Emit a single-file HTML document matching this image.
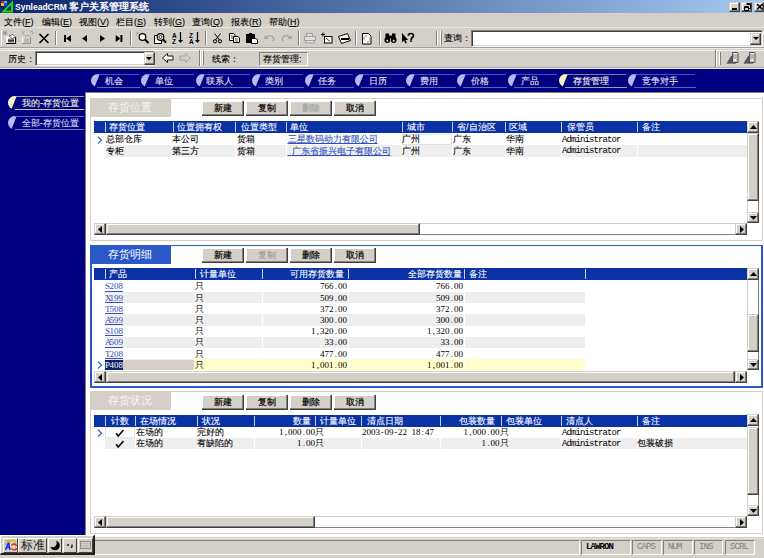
<!DOCTYPE html><html><head><meta charset="utf-8"><style>
*{margin:0;padding:0;box-sizing:border-box}
html,body{width:764px;height:558px;overflow:hidden;background:#d4d0c8;font-family:"Liberation Sans",sans-serif}
div{position:absolute}
svg{position:absolute;overflow:visible}
.t{font-size:9px;line-height:11px;white-space:nowrap;color:#000;-webkit-text-stroke:0.1px currentColor}
.m{font-family:"Liberation Mono",monospace;font-size:9px;line-height:11px;white-space:nowrap;letter-spacing:-0.9px;color:#000}
.n{font-family:"Liberation Serif",serif;font-size:9px;line-height:11px;white-space:nowrap;letter-spacing:0;color:#000}
.lk{color:#3050c0;text-decoration:underline}
.btn{background:#d4d0c8;border-right:1px solid #404040;border-bottom:1px solid #404040;box-shadow:inset -1px -1px 0 #808080, inset 1px 1px 0 #fff;font-size:9px;line-height:14px;text-align:center;white-space:nowrap;-webkit-text-stroke:0.2px currentColor}
.sunk{border-top:1px solid #808080;border-left:1px solid #808080;border-bottom:1px solid #fff;border-right:1px solid #fff;box-shadow:inset 1px 1px 0 #404040, inset -1px -1px 0 #d4d0c8}
.raise{background:#d4d0c8;border-top:1px solid #d4d0c8;border-left:1px solid #d4d0c8;border-right:1px solid #404040;border-bottom:1px solid #404040;box-shadow:inset -1px -1px 0 #808080, inset 1px 1px 0 #fff}
</style></head><body>
<div style="left:0;top:0;width:764px;height:13px;background:linear-gradient(to right,#0a246a 0%,#a6caf0 100%)"></div>
<svg style="left:0;top:0" width="14" height="13" viewBox="0 0 14 13"><rect x="1" y="1" width="3" height="2" fill="#e02020"/><rect x="4" y="1" width="3" height="2" fill="#20d0f0"/><rect x="1" y="3" width="3" height="3" fill="#e0c020"/><rect x="4" y="3" width="3" height="3" fill="#2040f0"/><path d="M1 12.5 L13 0.5 L13 12.5 Z M5.5 10.5 L11 10.5 L11 5 Z" fill="#10e010" fill-rule="evenodd"/></svg>
<div class="t" style="left:15px;top:1px;color:#fff;font-weight:bold;line-height:12px;-webkit-text-stroke:0"><span style="font-size:8.5px">SynleadCRM</span> <span style="font-size:9.6px">客户关系管理系统</span></div>
<div class="raise" style="left:729px;top:2px;width:11px;height:10px"></div>
<div class="raise" style="left:741px;top:2px;width:11px;height:10px"></div>
<div class="raise" style="left:754px;top:2px;width:10px;height:10px"></div>
<div style="left:732px;top:8px;width:5px;height:2px;background:#000"></div>
<svg style="left:743px;top:3px" width="9" height="8"><path d="M3.5 1.5h4v4h-1.5 M3.5 0.5h4 M1.5 3.5h4v4h-4z M1.5 4.5h4" stroke="#000" fill="none" stroke-width="1"/></svg>
<svg style="left:756px;top:3px" width="8" height="8"><path d="M1 1L6.5 6.5M6.5 1L1 6.5" stroke="#000" stroke-width="1.5"/></svg>
<div class="t" style="left:4px;top:15.7px;line-height:12px;-webkit-text-stroke:0.1px #000">文件(<u>F</u>)</div>
<div class="t" style="left:42px;top:15.7px;line-height:12px;-webkit-text-stroke:0.1px #000">编辑(<u>E</u>)</div>
<div class="t" style="left:79px;top:15.7px;line-height:12px;-webkit-text-stroke:0.1px #000">视图(<u>V</u>)</div>
<div class="t" style="left:116px;top:15.7px;line-height:12px;-webkit-text-stroke:0.1px #000">栏目(<u>S</u>)</div>
<div class="t" style="left:154px;top:15.7px;line-height:12px;-webkit-text-stroke:0.1px #000">转到(<u>G</u>)</div>
<div class="t" style="left:192px;top:15.7px;line-height:12px;-webkit-text-stroke:0.1px #000">查询(<u>Q</u>)</div>
<div class="t" style="left:231px;top:15.7px;line-height:12px;-webkit-text-stroke:0.1px #000">报表(<u>R</u>)</div>
<div class="t" style="left:269px;top:15.7px;line-height:12px;-webkit-text-stroke:0.1px #000">帮助(<u>H</u>)</div>
<div style="left:0px;top:27px;width:764px;height:1px;background:#e8e6e0"></div>
<div style="left:0px;top:47px;width:764px;height:1px;background:#a0a0a0"></div>
<div style="left:0px;top:48px;width:764px;height:1px;background:#ececec"></div>
<div style="left:0px;top:50px;width:764px;height:1px;background:#f4f4f4"></div>
<div style="left:0px;top:67px;width:764px;height:1px;background:#a8a8a8"></div>
<div style="left:0px;top:68px;width:764px;height:1px;background:#ececec"></div>
<div style="left:1px;top:30px;width:1px;height:15px;background:#fff"></div>
<div style="left:55px;top:31px;width:1px;height:14px;background:#808080"></div>
<div style="left:56px;top:31px;width:1px;height:14px;background:#fff"></div>
<div style="left:130px;top:31px;width:1px;height:14px;background:#808080"></div>
<div style="left:131px;top:31px;width:1px;height:14px;background:#fff"></div>
<div style="left:205px;top:31px;width:1px;height:14px;background:#808080"></div>
<div style="left:206px;top:31px;width:1px;height:14px;background:#fff"></div>
<div style="left:298px;top:31px;width:1px;height:14px;background:#808080"></div>
<div style="left:299px;top:31px;width:1px;height:14px;background:#fff"></div>
<div style="left:355px;top:31px;width:1px;height:14px;background:#808080"></div>
<div style="left:356px;top:31px;width:1px;height:14px;background:#fff"></div>
<div style="left:379px;top:31px;width:1px;height:14px;background:#808080"></div>
<div style="left:380px;top:31px;width:1px;height:14px;background:#fff"></div>
<div style="left:436px;top:31px;width:1px;height:14px;background:#808080"></div>
<div style="left:437px;top:31px;width:1px;height:14px;background:#fff"></div>
<div style="left:440px;top:31px;width:1px;height:14px;background:#fff"></div>
<div style="left:441px;top:31px;width:1px;height:14px;background:#808080"></div>
<svg style="left:0;top:0" width="764" height="70"><path d="M3 31l4 4M7 31l-4 4M5 30.5v5M2.5 33h5" stroke="#909090" stroke-width="0.8"/><path d="M6.5 36.5v7h9v-7" fill="#fff" stroke="#f8f8f8"/><path d="M6 43.5h10M15.5 37v7" stroke="#000" stroke-width="1.2"/><rect x="8" y="38.5" width="6" height="4" fill="#808080"/><rect x="8" y="40" width="6" height="1.5" fill="#404040"/><path d="M9 36l3.5-1.5 3 2.5-3 1.5z" fill="#fff" stroke="#303030" stroke-width="0.7"/><path d="M21 31l4 4M25 31l-4 4M23 30.5v5" stroke="#b0b0b0" stroke-width="0.8"/><path d="M22.5 37v6.5h8v-6.5" fill="none" stroke="#fff" stroke-width="1"/><path d="M22 43.5h9M30.5 37v7" stroke="#909090" stroke-width="1"/><rect x="24" y="38.5" width="5" height="4" fill="#b8b8b8"/><path d="M25 36.5l3-1.5 2.5 2" stroke="#909090" fill="none" stroke-width="0.8"/><path d="M30.5 32.5c0-1.5 2.5-1.5 2.5 0s-1.2 1-1.2 2.2" stroke="#909090" fill="none" stroke-width="0.9"/><path d="M39.5 34L48.5 43M48.5 34L39.5 43" stroke="#000" stroke-width="1.6"/><rect x="64" y="35" width="2" height="7" fill="#000"/><path d="M71 35v7l-5-3.5z" fill="#000"/><path d="M87 35v7l-5-3.5z" fill="#000"/><path d="M100 35v7l5-3.5z" fill="#000"/><path d="M115.7 35v7l4.7-3.5z" fill="#000"/><rect x="120.4" y="35" width="2" height="7" fill="#000"/><path d="M136 32l2 2M138 32v2M136 34h2" stroke="#a0a0a0" stroke-width="0.8"/><circle cx="142.5" cy="37" r="3.3" fill="#fff" stroke="#000" stroke-width="1.2"/><path d="M145 39.5L148.5 43" stroke="#000" stroke-width="2"/><path d="M154.5 35.5h5l2 2v6h-7z" fill="#fff" stroke="#000"/><circle cx="160.5" cy="37" r="3.3" fill="#fff" stroke="#000" stroke-width="1.2"/><circle cx="160.5" cy="37" r="1.5" fill="none" stroke="#000" stroke-width="0.8"/><path d="M163 39.5L166 42.5" stroke="#000" stroke-width="2"/><text x="172" y="37.5" font-family="Liberation Sans" font-weight="bold" font-size="6.5" fill="#000">A</text><text x="172" y="43.5" font-family="Liberation Sans" font-weight="bold" font-size="6.5" fill="#000">Z</text><path d="M180.5 32v9" stroke="#000" stroke-width="1.2"/><path d="M178 40h5l-2.5 3z" fill="#000"/><text x="189" y="37.5" font-family="Liberation Sans" font-weight="bold" font-size="6.5" fill="#000">Z</text><text x="189" y="43.5" font-family="Liberation Sans" font-weight="bold" font-size="6.5" fill="#000">A</text><path d="M197.5 32v9" stroke="#000" stroke-width="1.2"/><path d="M195 40h5l-2.5 3z" fill="#000"/><path d="M214.5 33.5L219.5 40M220.5 33.5L215.5 40" stroke="#000" stroke-width="1"/><circle cx="215" cy="41.3" r="1.6" fill="none" stroke="#000" stroke-width="1"/><circle cx="220" cy="41.3" r="1.6" fill="none" stroke="#000" stroke-width="1"/><path d="M229.5 33.5h4l1.5 1.5v5.5h-5.5z" fill="#fff" stroke="#000"/><path d="M233.5 36.5h4.5l1.5 1.5v4.5h-6z" fill="#fff" stroke="#000"/><path d="M231 36h2M231 38h2M235 39h3M235 41h3" stroke="#000" stroke-width="0.7"/><rect x="246.5" y="34.5" width="8" height="8" fill="#000" stroke="#000"/><rect x="249" y="33" width="3" height="2" fill="#000"/><path d="M251.5 38.5h4.5l1.5 1.5v3.5h-6z" fill="#fff" stroke="#000"/><path d="M266 37.5c2-2.5 6-2.5 7.5 0.5c0.5 1.5 0 2.5-1 3" stroke="#a0a0a0" fill="none" stroke-width="1.2"/><path d="M264.5 35v4h4z" fill="#a0a0a0"/><path d="M290 37.5c-2-2.5-6-2.5-7.5 0.5c-0.5 1.5 0 2.5 1 3" stroke="#a0a0a0" fill="none" stroke-width="1.2"/><path d="M291.5 35v4h-4z" fill="#a0a0a0"/><path d="M306.5 33.5h6v3h-6z M304.5 36.5h11v4h-11z M305.5 40.5h9v2.5h-9z" fill="#e0e0e0" stroke="#a0a0a0"/><path d="M321 34.5h4M323 32.5v4" stroke="#000" stroke-width="1"/><rect x="324.5" y="36.5" width="7.5" height="6.5" fill="#fff" stroke="#000"/><path d="M326 38l4 3.5" stroke="#000" stroke-width="0.8"/><path d="M338.5 36.5l9-3 3 7-9 3z" fill="#fff" stroke="#000"/><rect x="341" y="38" width="8" height="2" fill="#000"/><path d="M362.5 33.5h6l2.5 2.5v8h-8.5z" fill="#fff" stroke="#000"/><path d="M365 40.5a2.5 2.5 0 0 1 2-4.5M369 37.5a2.5 2.5 0 0 1-2 4.5" stroke="#808080" fill="none" stroke-width="0.9"/><circle cx="387.3" cy="40" r="2.9" fill="#000"/><circle cx="393.7" cy="40" r="2.9" fill="#000"/><rect x="385.5" y="33.5" width="3.5" height="6" fill="#000"/><rect x="392" y="33.5" width="3.5" height="6" fill="#000"/><rect x="388" y="35.5" width="5" height="3" fill="#000"/><circle cx="387.3" cy="40.8" r="1.1" fill="#d4d0c8"/><circle cx="393.7" cy="40.8" r="1.1" fill="#d4d0c8"/><path d="M402 33v9.5l2-2 1.6 3 1.3-.7-1.5-2.8h2.8z" fill="#000"/><path d="M408.3 35.8c0-1.7 1.3-2.3 2.6-2.3s2.6 0.7 2.6 2.2c0 1.7-2.3 1.9-2.3 3.6v0.6" stroke="#000" stroke-width="1.7" fill="none"/><rect x="410.2" y="40.3" width="1.7" height="1.6" fill="#000"/><path d="M162.5 58l5-4.5v2.5h5.5v4h-5.5v2.5z" fill="#fff" stroke="#000" stroke-width="0.9"/><path d="M190.5 58l-5-4.5v2.5h-5.5v4h5.5v2.5z" fill="none" stroke="#a8a8a8" stroke-width="1"/><path d="M726.5 63.5l4.5-7.5 2 0 0 7.5z" fill="#505868"/><path d="M732.5 52.5h5l0.5 0.5v9.5h-5.5z" fill="#eeeeee" stroke="#505050"/><path d="M733 55h4.5M733 57h4.5" stroke="#606060" stroke-width="0.8"/><rect x="734" y="58.5" width="2.5" height="3" fill="#fff" stroke="#909090" stroke-width="0.6"/><path d="M727 63.5h9" stroke="#808080"/><path d="M743.5 63.5l4.5-7.5 2 0 0 7.5z" fill="#505868"/><path d="M749.5 52.5h5l0.5 0.5v9.5h-5.5z" fill="#eeeeee" stroke="#505050"/><path d="M750 55h4.5M750 57h4.5" stroke="#606060" stroke-width="0.8"/><rect x="751" y="58.5" width="2.5" height="3" fill="#fff" stroke="#909090" stroke-width="0.6"/><path d="M744 63.5h9" stroke="#808080"/></svg>
<div class="t" style="left:8px;top:54px;">历史：</div>
<div class="sunk" style="left:35px;top:51px;width:120px;height:15px;background:#fff"></div>
<div class="raise" style="left:143.5px;top:52px;width:11px;height:13px"></div>
<svg style="left:146px;top:57px" width="6" height="4"><path d="M0 0h6L3 3.2z" fill="#000"/></svg>
<div style="left:199px;top:50px;width:1px;height:16px;background:#808080"></div>
<div style="left:200px;top:50px;width:1px;height:16px;background:#fff"></div>
<div style="left:202px;top:51px;width:1px;height:14px;background:#fff"></div>
<div style="left:203px;top:51px;width:1px;height:14px;background:#808080"></div>
<div class="t" style="left:212px;top:54px;">线索：</div>
<div style="left:259px;top:52px;width:49px;height:14px;border-top:1px solid #808080;border-left:1px solid #808080;border-bottom:1px solid #fff;border-right:1px solid #fff"></div>
<div class="t" style="left:263px;top:54px;">存货管理:</div>
<div style="left:715px;top:50px;width:1px;height:17px;background:#808080"></div>
<div style="left:716px;top:50px;width:1px;height:17px;background:#fff"></div>
<div style="left:719px;top:52px;width:1px;height:13px;background:#fff"></div>
<div style="left:720px;top:52px;width:1px;height:13px;background:#808080"></div>
<div class="sunk" style="left:471px;top:30px;width:292px;height:17px;background:#fff"></div>
<div class="t" style="left:444px;top:33px;">查询：</div>
<div class="raise" style="left:750px;top:33px;width:11px;height:12px"></div>
<svg style="left:753px;top:37px" width="6" height="4"><path d="M0 0h6L3 3z" fill="#000"/></svg>
<div style="left:0px;top:69px;width:764px;height:466px;background:#000080"></div>
<svg style="left:90.8px;top:74.3px" width="8.8" height="12.6" viewBox="0 0 9 13" preserveAspectRatio="none"><path d="M8.6 0 H6.5 C2.5 0.6 0 3.5 0 6.8 C0 9.3 1.6 11.6 3.8 12.8 L8.6 1 Z" fill="#b8b8f4"/></svg>
<div style="left:97px;top:74.3px;width:42px;height:1px;background:#6c6cc8;opacity:0.7"></div>
<div style="left:96.5px;top:87.2px;width:43px;height:1px;background:#6c6cc8;opacity:0.9"></div>
<div class="t" style="left:105px;top:76.2px;color:#e0e0f8;-webkit-text-stroke:0.1px currentColor">机会</div>
<svg style="left:140.8px;top:74.3px" width="8.8" height="12.6" viewBox="0 0 9 13" preserveAspectRatio="none"><path d="M8.6 0 H6.5 C2.5 0.6 0 3.5 0 6.8 C0 9.3 1.6 11.6 3.8 12.8 L8.6 1 Z" fill="#b8b8f4"/></svg>
<div style="left:147px;top:74.3px;width:47px;height:1px;background:#6c6cc8;opacity:0.7"></div>
<div style="left:146.5px;top:87.2px;width:48px;height:1px;background:#6c6cc8;opacity:0.9"></div>
<div class="t" style="left:155px;top:76.2px;color:#e0e0f8;-webkit-text-stroke:0.1px currentColor">单位</div>
<svg style="left:195.8px;top:74.3px" width="8.8" height="12.6" viewBox="0 0 9 13" preserveAspectRatio="none"><path d="M8.6 0 H6.5 C2.5 0.6 0 3.5 0 6.8 C0 9.3 1.6 11.6 3.8 12.8 L8.6 1 Z" fill="#b8b8f4"/></svg>
<div style="left:202px;top:74.3px;width:48px;height:1px;background:#6c6cc8;opacity:0.7"></div>
<div style="left:201.5px;top:87.2px;width:49px;height:1px;background:#6c6cc8;opacity:0.9"></div>
<div class="t" style="left:206px;top:76.2px;color:#e0e0f8;-webkit-text-stroke:0.1px currentColor">联系人</div>
<svg style="left:251.8px;top:74.3px" width="8.8" height="12.6" viewBox="0 0 9 13" preserveAspectRatio="none"><path d="M8.6 0 H6.5 C2.5 0.6 0 3.5 0 6.8 C0 9.3 1.6 11.6 3.8 12.8 L8.6 1 Z" fill="#b8b8f4"/></svg>
<div style="left:258px;top:74.3px;width:45px;height:1px;background:#6c6cc8;opacity:0.7"></div>
<div style="left:257.5px;top:87.2px;width:46px;height:1px;background:#6c6cc8;opacity:0.9"></div>
<div class="t" style="left:265px;top:76.2px;color:#e0e0f8;-webkit-text-stroke:0.1px currentColor">类别</div>
<svg style="left:304.8px;top:74.3px" width="8.8" height="12.6" viewBox="0 0 9 13" preserveAspectRatio="none"><path d="M8.6 0 H6.5 C2.5 0.6 0 3.5 0 6.8 C0 9.3 1.6 11.6 3.8 12.8 L8.6 1 Z" fill="#b8b8f4"/></svg>
<div style="left:311px;top:74.3px;width:42px;height:1px;background:#6c6cc8;opacity:0.7"></div>
<div style="left:310.5px;top:87.2px;width:43px;height:1px;background:#6c6cc8;opacity:0.9"></div>
<div class="t" style="left:318px;top:76.2px;color:#e0e0f8;-webkit-text-stroke:0.1px currentColor">任务</div>
<svg style="left:354.8px;top:74.3px" width="8.8" height="12.6" viewBox="0 0 9 13" preserveAspectRatio="none"><path d="M8.6 0 H6.5 C2.5 0.6 0 3.5 0 6.8 C0 9.3 1.6 11.6 3.8 12.8 L8.6 1 Z" fill="#b8b8f4"/></svg>
<div style="left:361px;top:74.3px;width:43px;height:1px;background:#6c6cc8;opacity:0.7"></div>
<div style="left:360.5px;top:87.2px;width:44px;height:1px;background:#6c6cc8;opacity:0.9"></div>
<div class="t" style="left:369px;top:76.2px;color:#e0e0f8;-webkit-text-stroke:0.1px currentColor">日历</div>
<svg style="left:405.8px;top:74.3px" width="8.8" height="12.6" viewBox="0 0 9 13" preserveAspectRatio="none"><path d="M8.6 0 H6.5 C2.5 0.6 0 3.5 0 6.8 C0 9.3 1.6 11.6 3.8 12.8 L8.6 1 Z" fill="#b8b8f4"/></svg>
<div style="left:412px;top:74.3px;width:43px;height:1px;background:#6c6cc8;opacity:0.7"></div>
<div style="left:411.5px;top:87.2px;width:44px;height:1px;background:#6c6cc8;opacity:0.9"></div>
<div class="t" style="left:420px;top:76.2px;color:#e0e0f8;-webkit-text-stroke:0.1px currentColor">费用</div>
<svg style="left:456.8px;top:74.3px" width="8.8" height="12.6" viewBox="0 0 9 13" preserveAspectRatio="none"><path d="M8.6 0 H6.5 C2.5 0.6 0 3.5 0 6.8 C0 9.3 1.6 11.6 3.8 12.8 L8.6 1 Z" fill="#b8b8f4"/></svg>
<div style="left:463px;top:74.3px;width:43px;height:1px;background:#6c6cc8;opacity:0.7"></div>
<div style="left:462.5px;top:87.2px;width:44px;height:1px;background:#6c6cc8;opacity:0.9"></div>
<div class="t" style="left:471px;top:76.2px;color:#e0e0f8;-webkit-text-stroke:0.1px currentColor">价格</div>
<svg style="left:507.8px;top:74.3px" width="8.8" height="12.6" viewBox="0 0 9 13" preserveAspectRatio="none"><path d="M8.6 0 H6.5 C2.5 0.6 0 3.5 0 6.8 C0 9.3 1.6 11.6 3.8 12.8 L8.6 1 Z" fill="#b8b8f4"/></svg>
<div style="left:514px;top:74.3px;width:43px;height:1px;background:#6c6cc8;opacity:0.7"></div>
<div style="left:513.5px;top:87.2px;width:44px;height:1px;background:#6c6cc8;opacity:0.9"></div>
<div class="t" style="left:521px;top:76.2px;color:#e0e0f8;-webkit-text-stroke:0.1px currentColor">产品</div>
<svg style="left:558.8px;top:74.3px" width="8.8" height="12.6" viewBox="0 0 9 13" preserveAspectRatio="none"><path d="M8.6 0 H6.5 C2.5 0.6 0 3.5 0 6.8 C0 9.3 1.6 11.6 3.8 12.8 L8.6 1 Z" fill="#f8f4c0"/></svg>
<div style="left:565px;top:74.3px;width:61px;height:1px;background:#b0b0a8;opacity:0.7"></div>
<div style="left:564.5px;top:87.2px;width:62px;height:1px;background:#b0b0a8;opacity:0.9"></div>
<div class="t" style="left:573px;top:76.2px;color:#f8f8e0;-webkit-text-stroke:0.1px currentColor">存货管理</div>
<svg style="left:627.8px;top:74.3px" width="8.8" height="12.6" viewBox="0 0 9 13" preserveAspectRatio="none"><path d="M8.6 0 H6.5 C2.5 0.6 0 3.5 0 6.8 C0 9.3 1.6 11.6 3.8 12.8 L8.6 1 Z" fill="#b8b8f4"/></svg>
<div style="left:634px;top:74.3px;width:61px;height:1px;background:#6c6cc8;opacity:0.7"></div>
<div style="left:633.5px;top:87.2px;width:62px;height:1px;background:#6c6cc8;opacity:0.9"></div>
<div class="t" style="left:642px;top:76.2px;color:#e0e0f8;-webkit-text-stroke:0.1px currentColor">竞争对手</div>
<svg style="left:7.9px;top:96px" width="8.7" height="13" viewBox="0 0 9 13" preserveAspectRatio="none"><path d="M8.6 0 H6.5 C2.5 0.6 0 3.5 0 6.8 C0 9.3 1.6 11.6 3.8 12.8 L8.6 1 Z" fill="#f8f4c0"/></svg>
<div style="left:14px;top:96.2px;width:70px;height:1px;background:#c4c4b4;opacity:0.8"></div>
<div style="left:14.5px;top:109px;width:69.5px;height:1px;background:#c4c4b4"></div>
<div class="t" style="left:22px;top:98px;color:#f0f0d0">我的-存货位置</div>
<svg style="left:7.9px;top:116px" width="8.7" height="13" viewBox="0 0 9 13" preserveAspectRatio="none"><path d="M8.6 0 H6.5 C2.5 0.6 0 3.5 0 6.8 C0 9.3 1.6 11.6 3.8 12.8 L8.6 1 Z" fill="#b8b8f4"/></svg>
<div style="left:14px;top:116.2px;width:70px;height:1px;background:#7878d0;opacity:0.8"></div>
<div style="left:14.5px;top:129px;width:69.5px;height:1px;background:#7878d0"></div>
<div class="t" style="left:22px;top:118px;color:#d8d8f8">全部-存货位置</div>
<div style="left:85px;top:92px;width:679px;height:443px;background:#fff"></div>
<div style="left:85px;top:92px;width:679px;height:1px;background:#808080"></div>
<div style="left:85px;top:92px;width:1px;height:443px;background:#808080"></div>
<div style="left:90px;top:98px;width:81px;height:19px;background:#d4d0c8"></div>
<div class="t" style="left:89.5px;top:99.3px;width:81px;text-align:center;color:#f6f6f6;font-size:11px;line-height:16px;-webkit-text-stroke:0">存货位置</div>
<div style="left:171px;top:98px;width:592px;height:1px;background:#d4d0c8"></div>
<div style="left:762px;top:98px;width:1px;height:142px;background:#d4d0c8"></div>
<div style="left:90px;top:240px;width:673px;height:1px;background:#d4d0c8"></div>
<div style="left:90px;top:117px;width:1px;height:123px;background:#d4d0c8"></div>
<div class="btn" style="left:202px;top:101px;width:42px;height:15px;color:#000">新建</div>
<div class="btn" style="left:246px;top:101px;width:42px;height:15px;color:#000">复制</div>
<div class="btn" style="left:290px;top:101px;width:42px;height:15px;color:#a0a0a0">删除</div>
<div class="btn" style="left:334px;top:101px;width:42px;height:15px;color:#000">取消</div>
<div style="left:94px;top:121px;width:653px;height:12px;background:#0a32a4"></div>
<div style="left:105px;top:122px;width:1px;height:10px;background:#c8d0f0"></div>
<div style="left:173px;top:122px;width:1px;height:10px;background:#c8d0f0"></div>
<div style="left:235px;top:122px;width:1px;height:10px;background:#c8d0f0"></div>
<div style="left:286px;top:122px;width:1px;height:10px;background:#c8d0f0"></div>
<div style="left:402px;top:122px;width:1px;height:10px;background:#c8d0f0"></div>
<div style="left:452px;top:122px;width:1px;height:10px;background:#c8d0f0"></div>
<div style="left:505px;top:122px;width:1px;height:10px;background:#c8d0f0"></div>
<div style="left:561px;top:122px;width:1px;height:10px;background:#c8d0f0"></div>
<div style="left:637px;top:122px;width:1px;height:10px;background:#c8d0f0"></div>
<div class="t" style="left:109px;top:122px;color:#fff;-webkit-text-stroke:0.1px #fff">存货位置</div>
<div class="t" style="left:177px;top:122px;color:#fff;-webkit-text-stroke:0.1px #fff">位置拥有权</div>
<div class="t" style="left:241px;top:122px;color:#fff;-webkit-text-stroke:0.1px #fff">位置类型</div>
<div class="t" style="left:290px;top:122px;color:#fff;-webkit-text-stroke:0.1px #fff">单位</div>
<div class="t" style="left:407px;top:122px;color:#fff;-webkit-text-stroke:0.1px #fff">城市</div>
<div class="t" style="left:457px;top:122px;color:#fff;-webkit-text-stroke:0.1px #fff">省/自治区</div>
<div class="t" style="left:509px;top:122px;color:#fff;-webkit-text-stroke:0.1px #fff">区域</div>
<div class="t" style="left:567px;top:122px;color:#fff;-webkit-text-stroke:0.1px #fff">保管员</div>
<div class="t" style="left:642px;top:122px;color:#fff;-webkit-text-stroke:0.1px #fff">备注</div>
<div style="left:105px;top:145.0px;width:642px;height:11.5px;background:#eeeeee"></div>
<div style="left:173px;top:145.0px;width:1px;height:11.5px;background:#fff"></div>
<div style="left:235px;top:145.0px;width:1px;height:11.5px;background:#fff"></div>
<div style="left:286px;top:145.0px;width:1px;height:11.5px;background:#fff"></div>
<div style="left:402px;top:145.0px;width:1px;height:11.5px;background:#fff"></div>
<div style="left:452px;top:145.0px;width:1px;height:11.5px;background:#fff"></div>
<div style="left:505px;top:145.0px;width:1px;height:11.5px;background:#fff"></div>
<div style="left:561px;top:145.0px;width:1px;height:11.5px;background:#fff"></div>
<div style="left:637px;top:145.0px;width:1px;height:11.5px;background:#fff"></div>
<div style="left:402px;top:133.5px;width:50px;height:11.5px;border:1px solid #e0e0e0"></div>
<svg style="left:96.5px;top:135.5px" width="6" height="9"><path d="M1 0.8L4.5 4.2L1 7.6" stroke="#3060d0" stroke-width="1.2" fill="none"/></svg>
<div class="t" style="left:106px;top:134.0px;">总部仓库</div>
<div class="t" style="left:172px;top:134.0px;">本公司</div>
<div class="t" style="left:237px;top:134.0px;">货箱</div>
<div class="t lk" style="left:287.5px;top:134.0px;">三星数码动力有限公司</div>
<div class="t" style="left:402px;top:134.0px;">广州</div>
<div class="t" style="left:453px;top:134.0px;">广东</div>
<div class="t" style="left:506px;top:134.0px;">华南</div>
<div class="m" style="left:562px;top:134.8px;">Administrator</div>
<div class="t" style="left:106px;top:145.5px;">专柜</div>
<div class="t" style="left:172px;top:145.5px;">第三方</div>
<div class="t" style="left:237px;top:145.5px;">货箱</div>
<div class="t lk" style="left:287.5px;top:145.5px;"><span style="letter-spacing:1.5px">&nbsp;</span>广东省振兴电子有限公司</div>
<div class="t" style="left:402px;top:145.5px;">广州</div>
<div class="t" style="left:453px;top:145.5px;">广东</div>
<div class="t" style="left:506px;top:145.5px;">华南</div>
<div class="m" style="left:562px;top:146.3px;">Administrator</div>
<div style="left:747px;top:121px;width:12px;height:102px;background:#fff;border-left:1px solid #d4d0c8;border-right:1px solid #808080"></div>
<div class="raise" style="left:747px;top:133px;width:12px;height:68px"></div>
<div class="raise" style="left:747px;top:121px;width:12px;height:12px"></div>
<svg style="left:750px;top:125px" width="7" height="4"><path d="M0 4h7L3.5 0z" fill="#000"/></svg>
<div class="raise" style="left:747px;top:212px;width:12px;height:11px"></div>
<svg style="left:750px;top:216px" width="7" height="4"><path d="M0 0h7L3.5 4z" fill="#000"/></svg>
<div style="left:94px;top:223px;width:653px;height:12px;background:#fff;border-top:1px solid #d4d0c8;border-bottom:1px solid #808080"></div>
<div class="raise" style="left:106px;top:223px;width:314px;height:12px"></div>
<div class="raise" style="left:94px;top:223px;width:12px;height:12px"></div>
<svg style="left:98px;top:226px" width="4" height="7"><path d="M4 0v7L0 3.5z" fill="#000"/></svg>
<div class="raise" style="left:735px;top:223px;width:12px;height:12px"></div>
<svg style="left:740px;top:226px" width="4" height="7"><path d="M0 0v7L4 3.5z" fill="#000"/></svg>
<div style="left:90px;top:245px;width:673px;height:143px;border:2px solid #2a58c8;border-top:none"></div>
<div style="left:90px;top:245px;width:81px;height:19px;background:#2a58c8"></div>
<div class="t" style="left:89.5px;top:246.3px;width:81px;text-align:center;color:#fff;font-size:11px;line-height:16px;-webkit-text-stroke:0">存货明细</div>
<div style="left:171px;top:244.7px;width:592px;height:1.6px;background:#2a58c8"></div>
<div class="btn" style="left:202px;top:248px;width:42px;height:15px;color:#000">新建</div>
<div class="btn" style="left:246px;top:248px;width:42px;height:15px;color:#a0a0a0">复制</div>
<div class="btn" style="left:290px;top:248px;width:42px;height:15px;color:#000">删除</div>
<div class="btn" style="left:334px;top:248px;width:42px;height:15px;color:#000">取消</div>
<div style="left:94px;top:267.7px;width:653px;height:12px;background:#0a32a4"></div>
<div style="left:105px;top:268.7px;width:1px;height:10px;background:#c8d0f0"></div>
<div style="left:195px;top:268.7px;width:1px;height:10px;background:#c8d0f0"></div>
<div style="left:262px;top:268.7px;width:1px;height:10px;background:#c8d0f0"></div>
<div style="left:348px;top:268.7px;width:1px;height:10px;background:#c8d0f0"></div>
<div style="left:464px;top:268.7px;width:1px;height:10px;background:#c8d0f0"></div>
<div style="left:585px;top:268.7px;width:1px;height:10px;background:#c8d0f0"></div>
<div class="t" style="left:109px;top:268.7px;color:#fff;-webkit-text-stroke:0.1px #fff">产品</div>
<div class="t" style="left:200px;top:268.7px;color:#fff;-webkit-text-stroke:0.1px #fff">计量单位</div>
<div class="t" style="left:44px;top:268.7px;width:300px;text-align:right;color:#fff;-webkit-text-stroke:0.1px #fff">可用存货数量</div>
<div class="t" style="left:162px;top:268.7px;width:300px;text-align:right;color:#fff;-webkit-text-stroke:0.1px #fff">全部存货数量</div>
<div class="t" style="left:469px;top:268.7px;color:#fff;-webkit-text-stroke:0.1px #fff">备注</div>
<div class="n lk" style="left:105px;top:281.3px;"><span style="display:inline-block;width:4.5px;text-align:center">S</span><span style="display:inline-block;width:4.5px;text-align:center">2</span><span style="display:inline-block;width:4.5px;text-align:center">0</span><span style="display:inline-block;width:4.5px;text-align:center">8</span></div>
<div style="left:105px;top:290.6px;width:17.8px;height:1px;background:#3050c0"></div>
<div class="t" style="left:195px;top:281.3px;-webkit-text-stroke:0">只</div>
<div class="n" style="left:47px;top:281.3px;width:300px;text-align:right;"><span style="display:inline-block;width:4.5px;text-align:center">7</span><span style="display:inline-block;width:4.5px;text-align:center">6</span><span style="display:inline-block;width:4.5px;text-align:center">6</span><span style="display:inline-block;width:4.5px;text-align:center">.</span><span style="display:inline-block;width:4.5px;text-align:center">0</span><span style="display:inline-block;width:4.5px;text-align:center">0</span></div>
<div class="n" style="left:163px;top:281.3px;width:300px;text-align:right;"><span style="display:inline-block;width:4.5px;text-align:center">7</span><span style="display:inline-block;width:4.5px;text-align:center">6</span><span style="display:inline-block;width:4.5px;text-align:center">6</span><span style="display:inline-block;width:4.5px;text-align:center">.</span><span style="display:inline-block;width:4.5px;text-align:center">0</span><span style="display:inline-block;width:4.5px;text-align:center">0</span></div>
<div style="left:105px;top:292.0px;width:480px;height:11.2px;background:#eeeeee"></div>
<div style="left:195px;top:292.0px;width:1px;height:11.2px;background:#fff"></div>
<div style="left:262px;top:292.0px;width:1px;height:11.2px;background:#fff"></div>
<div style="left:348px;top:292.0px;width:1px;height:11.2px;background:#fff"></div>
<div style="left:464px;top:292.0px;width:1px;height:11.2px;background:#fff"></div>
<div class="n lk" style="left:105px;top:292.5px;"><span style="display:inline-block;width:4.5px;text-align:center">X</span><span style="display:inline-block;width:4.5px;text-align:center">1</span><span style="display:inline-block;width:4.5px;text-align:center">9</span><span style="display:inline-block;width:4.5px;text-align:center">9</span></div>
<div style="left:105px;top:301.8px;width:17.8px;height:1px;background:#3050c0"></div>
<div class="t" style="left:195px;top:292.5px;-webkit-text-stroke:0">只</div>
<div class="n" style="left:47px;top:292.5px;width:300px;text-align:right;"><span style="display:inline-block;width:4.5px;text-align:center">5</span><span style="display:inline-block;width:4.5px;text-align:center">0</span><span style="display:inline-block;width:4.5px;text-align:center">9</span><span style="display:inline-block;width:4.5px;text-align:center">.</span><span style="display:inline-block;width:4.5px;text-align:center">0</span><span style="display:inline-block;width:4.5px;text-align:center">0</span></div>
<div class="n" style="left:163px;top:292.5px;width:300px;text-align:right;"><span style="display:inline-block;width:4.5px;text-align:center">5</span><span style="display:inline-block;width:4.5px;text-align:center">0</span><span style="display:inline-block;width:4.5px;text-align:center">9</span><span style="display:inline-block;width:4.5px;text-align:center">.</span><span style="display:inline-block;width:4.5px;text-align:center">0</span><span style="display:inline-block;width:4.5px;text-align:center">0</span></div>
<div class="n lk" style="left:105px;top:303.7px;"><span style="display:inline-block;width:4.5px;text-align:center">T</span><span style="display:inline-block;width:4.5px;text-align:center">5</span><span style="display:inline-block;width:4.5px;text-align:center">0</span><span style="display:inline-block;width:4.5px;text-align:center">8</span></div>
<div style="left:105px;top:313.0px;width:17.8px;height:1px;background:#3050c0"></div>
<div class="t" style="left:195px;top:303.7px;-webkit-text-stroke:0">只</div>
<div class="n" style="left:47px;top:303.7px;width:300px;text-align:right;"><span style="display:inline-block;width:4.5px;text-align:center">3</span><span style="display:inline-block;width:4.5px;text-align:center">7</span><span style="display:inline-block;width:4.5px;text-align:center">2</span><span style="display:inline-block;width:4.5px;text-align:center">.</span><span style="display:inline-block;width:4.5px;text-align:center">0</span><span style="display:inline-block;width:4.5px;text-align:center">0</span></div>
<div class="n" style="left:163px;top:303.7px;width:300px;text-align:right;"><span style="display:inline-block;width:4.5px;text-align:center">3</span><span style="display:inline-block;width:4.5px;text-align:center">7</span><span style="display:inline-block;width:4.5px;text-align:center">2</span><span style="display:inline-block;width:4.5px;text-align:center">.</span><span style="display:inline-block;width:4.5px;text-align:center">0</span><span style="display:inline-block;width:4.5px;text-align:center">0</span></div>
<div style="left:105px;top:314.4px;width:480px;height:11.2px;background:#eeeeee"></div>
<div style="left:195px;top:314.4px;width:1px;height:11.2px;background:#fff"></div>
<div style="left:262px;top:314.4px;width:1px;height:11.2px;background:#fff"></div>
<div style="left:348px;top:314.4px;width:1px;height:11.2px;background:#fff"></div>
<div style="left:464px;top:314.4px;width:1px;height:11.2px;background:#fff"></div>
<div class="n lk" style="left:105px;top:314.9px;"><span style="display:inline-block;width:4.5px;text-align:center">A</span><span style="display:inline-block;width:4.5px;text-align:center">5</span><span style="display:inline-block;width:4.5px;text-align:center">9</span><span style="display:inline-block;width:4.5px;text-align:center">9</span></div>
<div style="left:105px;top:324.2px;width:17.8px;height:1px;background:#3050c0"></div>
<div class="t" style="left:195px;top:314.9px;-webkit-text-stroke:0">只</div>
<div class="n" style="left:47px;top:314.9px;width:300px;text-align:right;"><span style="display:inline-block;width:4.5px;text-align:center">3</span><span style="display:inline-block;width:4.5px;text-align:center">0</span><span style="display:inline-block;width:4.5px;text-align:center">0</span><span style="display:inline-block;width:4.5px;text-align:center">.</span><span style="display:inline-block;width:4.5px;text-align:center">0</span><span style="display:inline-block;width:4.5px;text-align:center">0</span></div>
<div class="n" style="left:163px;top:314.9px;width:300px;text-align:right;"><span style="display:inline-block;width:4.5px;text-align:center">3</span><span style="display:inline-block;width:4.5px;text-align:center">0</span><span style="display:inline-block;width:4.5px;text-align:center">0</span><span style="display:inline-block;width:4.5px;text-align:center">.</span><span style="display:inline-block;width:4.5px;text-align:center">0</span><span style="display:inline-block;width:4.5px;text-align:center">0</span></div>
<div class="n lk" style="left:105px;top:326.1px;"><span style="display:inline-block;width:4.5px;text-align:center">S</span><span style="display:inline-block;width:4.5px;text-align:center">1</span><span style="display:inline-block;width:4.5px;text-align:center">0</span><span style="display:inline-block;width:4.5px;text-align:center">8</span></div>
<div style="left:105px;top:335.40000000000003px;width:17.8px;height:1px;background:#3050c0"></div>
<div class="t" style="left:195px;top:326.1px;-webkit-text-stroke:0">只</div>
<div class="n" style="left:47px;top:326.1px;width:300px;text-align:right;"><span style="display:inline-block;width:4.5px;text-align:center">1</span><span style="display:inline-block;width:4.5px;text-align:center">,</span><span style="display:inline-block;width:4.5px;text-align:center">3</span><span style="display:inline-block;width:4.5px;text-align:center">2</span><span style="display:inline-block;width:4.5px;text-align:center">0</span><span style="display:inline-block;width:4.5px;text-align:center">.</span><span style="display:inline-block;width:4.5px;text-align:center">0</span><span style="display:inline-block;width:4.5px;text-align:center">0</span></div>
<div class="n" style="left:163px;top:326.1px;width:300px;text-align:right;"><span style="display:inline-block;width:4.5px;text-align:center">1</span><span style="display:inline-block;width:4.5px;text-align:center">,</span><span style="display:inline-block;width:4.5px;text-align:center">3</span><span style="display:inline-block;width:4.5px;text-align:center">2</span><span style="display:inline-block;width:4.5px;text-align:center">0</span><span style="display:inline-block;width:4.5px;text-align:center">.</span><span style="display:inline-block;width:4.5px;text-align:center">0</span><span style="display:inline-block;width:4.5px;text-align:center">0</span></div>
<div style="left:105px;top:336.8px;width:480px;height:11.2px;background:#eeeeee"></div>
<div style="left:195px;top:336.8px;width:1px;height:11.2px;background:#fff"></div>
<div style="left:262px;top:336.8px;width:1px;height:11.2px;background:#fff"></div>
<div style="left:348px;top:336.8px;width:1px;height:11.2px;background:#fff"></div>
<div style="left:464px;top:336.8px;width:1px;height:11.2px;background:#fff"></div>
<div class="n lk" style="left:105px;top:337.3px;"><span style="display:inline-block;width:4.5px;text-align:center">A</span><span style="display:inline-block;width:4.5px;text-align:center">5</span><span style="display:inline-block;width:4.5px;text-align:center">0</span><span style="display:inline-block;width:4.5px;text-align:center">9</span></div>
<div style="left:105px;top:346.6px;width:17.8px;height:1px;background:#3050c0"></div>
<div class="t" style="left:195px;top:337.3px;-webkit-text-stroke:0">只</div>
<div class="n" style="left:47px;top:337.3px;width:300px;text-align:right;"><span style="display:inline-block;width:4.5px;text-align:center">3</span><span style="display:inline-block;width:4.5px;text-align:center">3</span><span style="display:inline-block;width:4.5px;text-align:center">.</span><span style="display:inline-block;width:4.5px;text-align:center">0</span><span style="display:inline-block;width:4.5px;text-align:center">0</span></div>
<div class="n" style="left:163px;top:337.3px;width:300px;text-align:right;"><span style="display:inline-block;width:4.5px;text-align:center">3</span><span style="display:inline-block;width:4.5px;text-align:center">3</span><span style="display:inline-block;width:4.5px;text-align:center">.</span><span style="display:inline-block;width:4.5px;text-align:center">0</span><span style="display:inline-block;width:4.5px;text-align:center">0</span></div>
<div class="n lk" style="left:105px;top:348.5px;"><span style="display:inline-block;width:4.5px;text-align:center">T</span><span style="display:inline-block;width:4.5px;text-align:center">2</span><span style="display:inline-block;width:4.5px;text-align:center">0</span><span style="display:inline-block;width:4.5px;text-align:center">8</span></div>
<div style="left:105px;top:357.8px;width:17.8px;height:1px;background:#3050c0"></div>
<div class="t" style="left:195px;top:348.5px;-webkit-text-stroke:0">只</div>
<div class="n" style="left:47px;top:348.5px;width:300px;text-align:right;"><span style="display:inline-block;width:4.5px;text-align:center">4</span><span style="display:inline-block;width:4.5px;text-align:center">7</span><span style="display:inline-block;width:4.5px;text-align:center">7</span><span style="display:inline-block;width:4.5px;text-align:center">.</span><span style="display:inline-block;width:4.5px;text-align:center">0</span><span style="display:inline-block;width:4.5px;text-align:center">0</span></div>
<div class="n" style="left:163px;top:348.5px;width:300px;text-align:right;"><span style="display:inline-block;width:4.5px;text-align:center">4</span><span style="display:inline-block;width:4.5px;text-align:center">7</span><span style="display:inline-block;width:4.5px;text-align:center">7</span><span style="display:inline-block;width:4.5px;text-align:center">.</span><span style="display:inline-block;width:4.5px;text-align:center">0</span><span style="display:inline-block;width:4.5px;text-align:center">0</span></div>
<div style="left:105px;top:359.2px;width:480px;height:11.2px;background:#eeeeee"></div>
<div style="left:195px;top:359.2px;width:1px;height:11.2px;background:#fff"></div>
<div style="left:262px;top:359.2px;width:1px;height:11.2px;background:#fff"></div>
<div style="left:348px;top:359.2px;width:1px;height:11.2px;background:#fff"></div>
<div style="left:464px;top:359.2px;width:1px;height:11.2px;background:#fff"></div>
<div style="left:105px;top:359.7px;width:89px;height:10.2px;background:#d4d0c8"></div>
<div style="left:194px;top:359.2px;width:391px;height:11.2px;background:#ffffcc"></div>
<div style="left:262px;top:359.2px;width:1px;height:11.2px;background:#fff"></div>
<div style="left:348px;top:359.2px;width:1px;height:11.2px;background:#fff"></div>
<div style="left:464px;top:359.2px;width:1px;height:11.2px;background:#fff"></div>
<div style="left:105px;top:360.2px;width:18px;height:9.5px;background:#0a246a"></div>
<div class="n" style="left:105px;top:359.7px;color:#fff"><span style="display:inline-block;width:4.5px;text-align:center">P</span><span style="display:inline-block;width:4.5px;text-align:center">4</span><span style="display:inline-block;width:4.5px;text-align:center">0</span><span style="display:inline-block;width:4.5px;text-align:center">8</span></div>
<svg style="left:96.5px;top:361.2px" width="6" height="9"><path d="M1 0.8L4.5 4.2L1 7.6" stroke="#3060d0" stroke-width="1.2" fill="none"/></svg>
<div class="t" style="left:195px;top:359.7px;-webkit-text-stroke:0">只</div>
<div class="n" style="left:47px;top:359.7px;width:300px;text-align:right;"><span style="display:inline-block;width:4.5px;text-align:center">1</span><span style="display:inline-block;width:4.5px;text-align:center">,</span><span style="display:inline-block;width:4.5px;text-align:center">0</span><span style="display:inline-block;width:4.5px;text-align:center">0</span><span style="display:inline-block;width:4.5px;text-align:center">1</span><span style="display:inline-block;width:4.5px;text-align:center">.</span><span style="display:inline-block;width:4.5px;text-align:center">0</span><span style="display:inline-block;width:4.5px;text-align:center">0</span></div>
<div class="n" style="left:163px;top:359.7px;width:300px;text-align:right;"><span style="display:inline-block;width:4.5px;text-align:center">1</span><span style="display:inline-block;width:4.5px;text-align:center">,</span><span style="display:inline-block;width:4.5px;text-align:center">0</span><span style="display:inline-block;width:4.5px;text-align:center">0</span><span style="display:inline-block;width:4.5px;text-align:center">1</span><span style="display:inline-block;width:4.5px;text-align:center">.</span><span style="display:inline-block;width:4.5px;text-align:center">0</span><span style="display:inline-block;width:4.5px;text-align:center">0</span></div>
<div style="left:747px;top:268px;width:12px;height:102px;background:#fff;border-left:1px solid #d4d0c8;border-right:1px solid #808080"></div>
<div class="raise" style="left:747px;top:314px;width:12px;height:38px"></div>
<div class="raise" style="left:747px;top:268px;width:12px;height:12px"></div>
<svg style="left:750px;top:272px" width="7" height="4"><path d="M0 4h7L3.5 0z" fill="#000"/></svg>
<div class="raise" style="left:747px;top:359px;width:12px;height:11px"></div>
<svg style="left:750px;top:363px" width="7" height="4"><path d="M0 0h7L3.5 4z" fill="#000"/></svg>
<div style="left:94px;top:371px;width:653px;height:12px;background:#fff;border-top:1px solid #d4d0c8;border-bottom:1px solid #808080"></div>
<div class="raise" style="left:106px;top:371px;width:629px;height:12px"></div>
<div class="raise" style="left:94px;top:371px;width:12px;height:12px"></div>
<svg style="left:98px;top:374px" width="4" height="7"><path d="M4 0v7L0 3.5z" fill="#000"/></svg>
<div class="raise" style="left:735px;top:371px;width:12px;height:12px"></div>
<svg style="left:740px;top:374px" width="4" height="7"><path d="M0 0v7L4 3.5z" fill="#000"/></svg>
<div style="left:90px;top:391px;width:81px;height:19px;background:#d4d0c8"></div>
<div class="t" style="left:89.5px;top:392.3px;width:81px;text-align:center;color:#f6f6f6;font-size:11px;line-height:16px;-webkit-text-stroke:0">存货状况</div>
<div style="left:171px;top:391px;width:592px;height:1px;background:#d4d0c8"></div>
<div style="left:762px;top:391px;width:1px;height:142px;background:#d4d0c8"></div>
<div style="left:90px;top:533px;width:673px;height:1px;background:#d4d0c8"></div>
<div style="left:90px;top:410px;width:1px;height:123px;background:#d4d0c8"></div>
<div class="btn" style="left:202px;top:394.5px;width:42px;height:15px;color:#000">新建</div>
<div class="btn" style="left:246px;top:394.5px;width:42px;height:15px;color:#000">复制</div>
<div class="btn" style="left:290px;top:394.5px;width:42px;height:15px;color:#000">删除</div>
<div class="btn" style="left:334px;top:394.5px;width:42px;height:15px;color:#000">取消</div>
<div style="left:94px;top:414.5px;width:653px;height:12px;background:#0a32a4"></div>
<div style="left:105px;top:415.5px;width:1px;height:10px;background:#c8d0f0"></div>
<div style="left:135px;top:415.5px;width:1px;height:10px;background:#c8d0f0"></div>
<div style="left:197px;top:415.5px;width:1px;height:10px;background:#c8d0f0"></div>
<div style="left:254px;top:415.5px;width:1px;height:10px;background:#c8d0f0"></div>
<div style="left:315px;top:415.5px;width:1px;height:10px;background:#c8d0f0"></div>
<div style="left:361px;top:415.5px;width:1px;height:10px;background:#c8d0f0"></div>
<div style="left:440px;top:415.5px;width:1px;height:10px;background:#c8d0f0"></div>
<div style="left:501px;top:415.5px;width:1px;height:10px;background:#c8d0f0"></div>
<div style="left:561px;top:415.5px;width:1px;height:10px;background:#c8d0f0"></div>
<div style="left:637px;top:415.5px;width:1px;height:10px;background:#c8d0f0"></div>
<div class="t" style="left:110.5px;top:415.5px;color:#fff;-webkit-text-stroke:0.1px #fff">计数</div>
<div class="t" style="left:140px;top:415.5px;color:#fff;-webkit-text-stroke:0.1px #fff">在场情况</div>
<div class="t" style="left:202px;top:415.5px;color:#fff;-webkit-text-stroke:0.1px #fff">状况</div>
<div class="t" style="left:10.5px;top:415.5px;width:300px;text-align:right;color:#fff;-webkit-text-stroke:0.1px #fff">数量</div>
<div class="t" style="left:320px;top:415.5px;color:#fff;-webkit-text-stroke:0.1px #fff">计量单位</div>
<div class="t" style="left:366.5px;top:415.5px;color:#fff;-webkit-text-stroke:0.1px #fff">清点日期</div>
<div class="t" style="left:195px;top:415.5px;width:300px;text-align:right;color:#fff;-webkit-text-stroke:0.1px #fff">包装数量</div>
<div class="t" style="left:506px;top:415.5px;color:#fff;-webkit-text-stroke:0.1px #fff">包装单位</div>
<div class="t" style="left:566px;top:415.5px;color:#fff;-webkit-text-stroke:0.1px #fff">清点人</div>
<div class="t" style="left:642px;top:415.5px;color:#fff;-webkit-text-stroke:0.1px #fff">备注</div>
<div style="left:105px;top:437.8px;width:642px;height:11.3px;background:#eeeeee"></div>
<div style="left:135px;top:437.8px;width:1px;height:11.3px;background:#fff"></div>
<div style="left:197px;top:437.8px;width:1px;height:11.3px;background:#fff"></div>
<div style="left:254px;top:437.8px;width:1px;height:11.3px;background:#fff"></div>
<div style="left:315px;top:437.8px;width:1px;height:11.3px;background:#fff"></div>
<div style="left:361px;top:437.8px;width:1px;height:11.3px;background:#fff"></div>
<div style="left:440px;top:437.8px;width:1px;height:11.3px;background:#fff"></div>
<div style="left:501px;top:437.8px;width:1px;height:11.3px;background:#fff"></div>
<div style="left:561px;top:437.8px;width:1px;height:11.3px;background:#fff"></div>
<div style="left:637px;top:437.8px;width:1px;height:11.3px;background:#fff"></div>
<div style="left:105px;top:426.5px;width:30px;height:11.3px;background:#fff;border:1px solid #e4e4e4"></div>
<svg style="left:96.5px;top:428.5px" width="6" height="9"><path d="M1 0.8L4.5 4.2L1 7.6" stroke="#3060d0" stroke-width="1.2" fill="none"/></svg>
<svg style="left:115px;top:428.5px" width="9" height="8"><path d="M1.2 4.2L3.2 7L8.5 1" stroke="#000" stroke-width="1.5" fill="none"/></svg>
<div class="t" style="left:135.5px;top:427.0px;">在场的</div>
<div class="t" style="left:197px;top:427.0px;">完好的</div>
<div class="n" style="left:15px;top:427.0px;width:300px;text-align:right;"><span style="display:inline-block;width:4.5px;text-align:center">1</span><span style="display:inline-block;width:4.5px;text-align:center">,</span><span style="display:inline-block;width:4.5px;text-align:center">0</span><span style="display:inline-block;width:4.5px;text-align:center">0</span><span style="display:inline-block;width:4.5px;text-align:center">0</span><span style="display:inline-block;width:4.5px;text-align:center">.</span><span style="display:inline-block;width:4.5px;text-align:center">0</span><span style="display:inline-block;width:4.5px;text-align:center">0</span></div>
<div class="t" style="left:315px;top:427.0px;-webkit-text-stroke:0">只</div>
<div class="n" style="left:362px;top:427.0px;"><span style="display:inline-block;width:4.5px;text-align:center">2</span><span style="display:inline-block;width:4.5px;text-align:center">0</span><span style="display:inline-block;width:4.5px;text-align:center">0</span><span style="display:inline-block;width:4.5px;text-align:center">3</span><span style="display:inline-block;width:4.5px;text-align:center">-</span><span style="display:inline-block;width:4.5px;text-align:center">0</span><span style="display:inline-block;width:4.5px;text-align:center">9</span><span style="display:inline-block;width:4.5px;text-align:center">-</span><span style="display:inline-block;width:4.5px;text-align:center">2</span><span style="display:inline-block;width:4.5px;text-align:center">2</span><span style="display:inline-block;width:4.5px;text-align:center">&nbsp;</span><span style="display:inline-block;width:4.5px;text-align:center">1</span><span style="display:inline-block;width:4.5px;text-align:center">8</span><span style="display:inline-block;width:4.5px;text-align:center">:</span><span style="display:inline-block;width:4.5px;text-align:center">4</span><span style="display:inline-block;width:4.5px;text-align:center">7</span></div>
<div class="n" style="left:199.5px;top:427.0px;width:300px;text-align:right;"><span style="display:inline-block;width:4.5px;text-align:center">1</span><span style="display:inline-block;width:4.5px;text-align:center">,</span><span style="display:inline-block;width:4.5px;text-align:center">0</span><span style="display:inline-block;width:4.5px;text-align:center">0</span><span style="display:inline-block;width:4.5px;text-align:center">0</span><span style="display:inline-block;width:4.5px;text-align:center">.</span><span style="display:inline-block;width:4.5px;text-align:center">0</span><span style="display:inline-block;width:4.5px;text-align:center">0</span></div>
<div class="t" style="left:500px;top:427.0px;-webkit-text-stroke:0">只</div>
<div class="m" style="left:562px;top:427.8px;">Administrator</div>
<svg style="left:115px;top:439.8px" width="9" height="8"><path d="M1.2 4.2L3.2 7L8.5 1" stroke="#000" stroke-width="1.5" fill="none"/></svg>
<div class="t" style="left:135.5px;top:438.3px;">在场的</div>
<div class="t" style="left:197px;top:438.3px;">有缺陷的</div>
<div class="n" style="left:15px;top:438.3px;width:300px;text-align:right;"><span style="display:inline-block;width:4.5px;text-align:center">1</span><span style="display:inline-block;width:4.5px;text-align:center">.</span><span style="display:inline-block;width:4.5px;text-align:center">0</span><span style="display:inline-block;width:4.5px;text-align:center">0</span></div>
<div class="t" style="left:315px;top:438.3px;-webkit-text-stroke:0">只</div>
<div class="n" style="left:199.5px;top:438.3px;width:300px;text-align:right;"><span style="display:inline-block;width:4.5px;text-align:center">1</span><span style="display:inline-block;width:4.5px;text-align:center">.</span><span style="display:inline-block;width:4.5px;text-align:center">0</span><span style="display:inline-block;width:4.5px;text-align:center">0</span></div>
<div class="t" style="left:500px;top:438.3px;-webkit-text-stroke:0">只</div>
<div class="m" style="left:562px;top:439.1px;">Administrator</div>
<div class="t" style="left:637px;top:438.3px;">包装破损</div>
<div style="left:747px;top:414px;width:12px;height:102px;background:#fff;border-left:1px solid #d4d0c8;border-right:1px solid #808080"></div>
<div class="raise" style="left:747px;top:427px;width:12px;height:68px"></div>
<div class="raise" style="left:747px;top:414px;width:12px;height:12px"></div>
<svg style="left:750px;top:418px" width="7" height="4"><path d="M0 4h7L3.5 0z" fill="#000"/></svg>
<div class="raise" style="left:747px;top:505px;width:12px;height:11px"></div>
<svg style="left:750px;top:509px" width="7" height="4"><path d="M0 0h7L3.5 4z" fill="#000"/></svg>
<div style="left:94px;top:516px;width:653px;height:12px;background:#fff;border-top:1px solid #d4d0c8;border-bottom:1px solid #808080"></div>
<div class="raise" style="left:106px;top:516px;width:209px;height:12px"></div>
<div class="raise" style="left:94px;top:516px;width:12px;height:12px"></div>
<svg style="left:98px;top:519px" width="4" height="7"><path d="M4 0v7L0 3.5z" fill="#000"/></svg>
<div class="raise" style="left:735px;top:516px;width:12px;height:12px"></div>
<svg style="left:740px;top:519px" width="4" height="7"><path d="M0 0v7L4 3.5z" fill="#000"/></svg>
<div style="left:0px;top:537px;width:764px;height:21px;background:#d4d0c8"></div>
<div style="left:0px;top:535px;width:85px;height:2px;background:#d4d0c8"></div>
<div style="left:85px;top:535px;width:679px;height:2px;background:#fff"></div>
<div style="left:0px;top:537.5px;width:764px;height:1px;background:#e4e2dc"></div>
<div style="left:94px;top:540px;width:486px;height:15px;border-top:1px solid #808080;border-left:1px solid #808080;border-bottom:1px solid #fff;border-right:1px solid #fff"></div>
<div style="left:581px;top:540px;width:50px;height:15px;border-top:1px solid #808080;border-left:1px solid #808080;border-bottom:1px solid #fff;border-right:1px solid #fff"></div>
<div class="m" style="left:586px;top:542px;color:#000;font-weight:bold">LAWRON</div>
<div style="left:632px;top:540px;width:30px;height:15px;border-top:1px solid #808080;border-left:1px solid #808080;border-bottom:1px solid #fff;border-right:1px solid #fff"></div>
<div class="m" style="left:637px;top:542px;color:#808080;font-weight:normal">CAPS</div>
<div style="left:663px;top:540px;width:30px;height:15px;border-top:1px solid #808080;border-left:1px solid #808080;border-bottom:1px solid #fff;border-right:1px solid #fff"></div>
<div class="m" style="left:668px;top:542px;color:#808080;font-weight:normal">NUM</div>
<div style="left:694px;top:540px;width:29px;height:15px;border-top:1px solid #808080;border-left:1px solid #808080;border-bottom:1px solid #fff;border-right:1px solid #fff"></div>
<div class="m" style="left:699px;top:542px;color:#808080;font-weight:normal">INS</div>
<div style="left:725px;top:540px;width:30px;height:15px;border-top:1px solid #808080;border-left:1px solid #808080;border-bottom:1px solid #fff;border-right:1px solid #fff"></div>
<div class="m" style="left:730px;top:542px;color:#808080;font-weight:normal">SCRL</div>
<div style="left:0;top:535px;width:95px;height:20px;background:#d4d0c8;border-top:1px solid #fff;border-left:1px solid #fff;border-right:2px solid #202020;border-bottom:2px solid #202020"></div>
<div style="left:3px;top:538px;width:15px;height:15px;background:#d4d0c8;border-top:1px solid #fff;border-left:1px solid #fff;border-right:1px solid #404040;border-bottom:1px solid #404040"></div>
<div style="left:18px;top:538px;width:29px;height:15px;background:#d4d0c8;border-top:1px solid #fff;border-left:1px solid #fff;border-right:1px solid #404040;border-bottom:1px solid #404040"></div>
<div style="left:48px;top:538px;width:14px;height:15px;background:#d4d0c8;border-top:1px solid #fff;border-left:1px solid #fff;border-right:1px solid #404040;border-bottom:1px solid #404040"></div>
<div style="left:63px;top:538px;width:14px;height:15px;background:#d4d0c8;border-top:1px solid #fff;border-left:1px solid #fff;border-right:1px solid #404040;border-bottom:1px solid #404040"></div>
<div style="left:78px;top:538px;width:15px;height:15px;background:#d4d0c8;border-top:1px solid #fff;border-left:1px solid #fff;border-right:1px solid #404040;border-bottom:1px solid #404040"></div>
<div class="t" style="left:20.5px;top:538.3px;font-size:11.5px;line-height:14px;color:#202020;-webkit-text-stroke:0">标准</div>
<svg style="left:0;top:535px" width="95" height="20"><path d="M5.3 10.5C5 6 8 4.5 10.5 6C12.5 4.5 15.5 5.5 15 9" stroke="#d0c000" stroke-width="1.5" fill="none"/><path d="M8.5 7.5L5.5 15M8.5 7.5L10 15M6.5 12.5h3" stroke="#1030e8" stroke-width="1.5" fill="none"/><path d="M11.5 10.5C12.5 8.5 16 8.5 16.5 11M16.5 13C16 15.5 12.5 15.5 11.5 13.5" stroke="#e82020" stroke-width="1.4" fill="none"/><mask id="mn"><rect x="45" y="0" width="20" height="20" fill="#fff"/><circle cx="52.5" cy="8" r="4.2" fill="#000"/></mask><circle cx="55" cy="10.5" r="4.8" fill="#000" mask="url(#mn)"/><circle cx="68" cy="10" r="0.9" fill="#000"/><path d="M72 9.5v2l-0.8 1.5" stroke="#000" stroke-width="1.2" fill="none"/><rect x="80.5" y="6.5" width="10" height="7" fill="none" stroke="#909090"/><path d="M81 8.5h9M81 10.5h9M82.5 12h6" stroke="#a0a0a0" stroke-width="0.8" stroke-dasharray="1 1"/></svg>
</body></html>
